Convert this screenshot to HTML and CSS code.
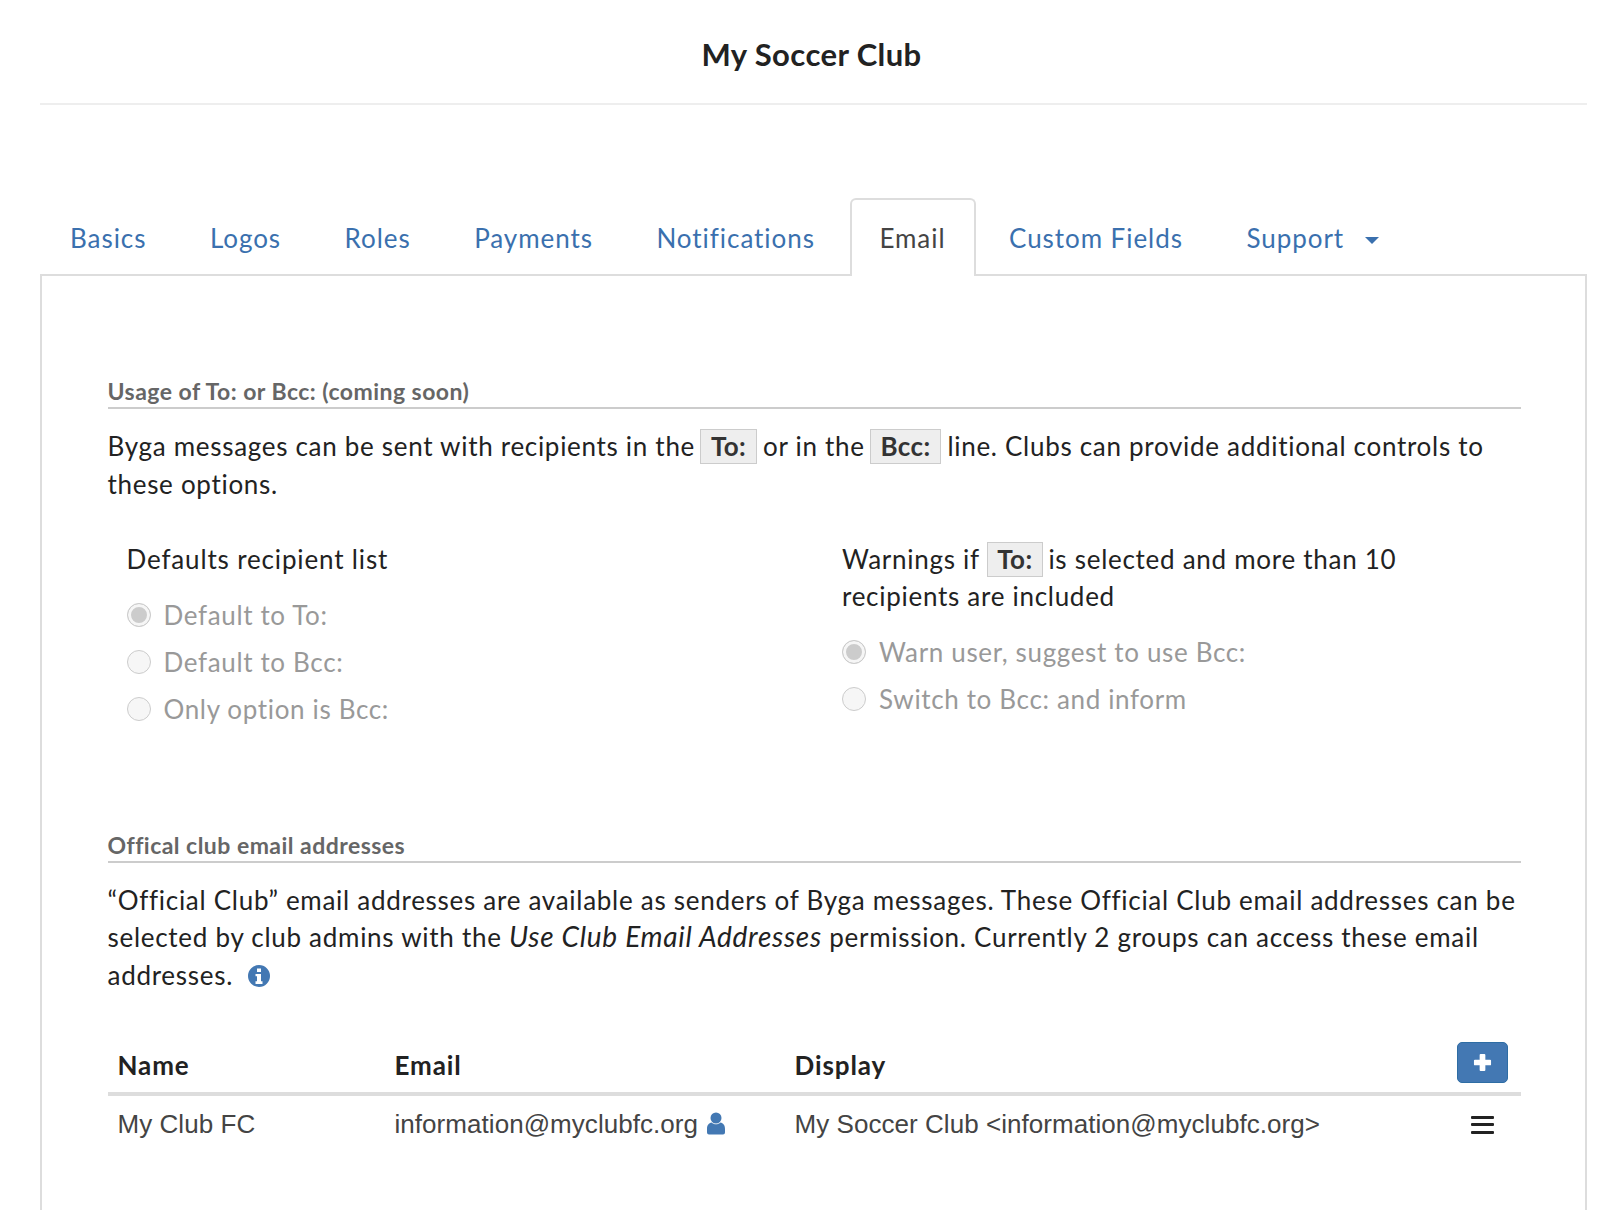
FILE: index.html
```html
<!DOCTYPE html>
<html lang="en">
<head>
<meta charset="utf-8">
<title>My Soccer Club</title>
<link rel="stylesheet" href="styles.css">
</head>
<body>
<header class="page-head"><h1 class="club-name">My Soccer Club</h1></header>
<nav class="tabs">
  <a class="tab">Basics</a>
  <a class="tab">Logos</a>
  <a class="tab">Roles</a>
  <a class="tab">Payments</a>
  <a class="tab">Notifications</a>
  <a class="tab tab-active">Email</a>
  <a class="tab">Custom Fields</a>
  <a class="tab">Support<span class="caret"></span></a>
</nav>
<main class="panel">
  <section class="usage">
    <h2 class="section-title">Usage of To: or Bcc: (coming soon)</h2>
    <p class="copy">Byga messages can be sent with recipients in the <span class="chip">To:</span> or in the <span class="chip">Bcc:</span> line. Clubs can provide additional controls to these options.</p>
    <div class="options">
      <div class="opt-col opt-left">
        <p class="opt-title">Defaults recipient list</p>
        <label class="radio"><span class="dot on"></span>Default to To:</label>
        <label class="radio"><span class="dot"></span>Default to Bcc:</label>
        <label class="radio"><span class="dot"></span>Only option is Bcc:</label>
      </div>
      <div class="opt-col opt-right">
        <p class="opt-title">Warnings if <span class="chip">To:</span> is selected and more than 10 recipients are included</p>
        <label class="radio"><span class="dot on"></span>Warn user, suggest to use Bcc:</label>
        <label class="radio"><span class="dot"></span>Switch to Bcc: and inform</label>
      </div>
    </div>
  </section>
  <section class="official">
    <h2 class="section-title">Offical club email addresses</h2>
    <p class="copy">“Official Club” email addresses are available as senders of Byga messages. These Official Club email addresses can be selected by club admins with the <em>Use Club Email Addresses</em> permission. Currently 2 groups can access these email addresses.
      <svg class="info" viewBox="0 0 24 24" aria-hidden="true"><path fill="#4378b3" fill-rule="evenodd" d="M12 1a11 11 0 1 1 0 22 11 11 0 0 1 0-22zM10 4.500v3.500h4V4.500zM8.500 10v2.300H10v5H8.500V20h7v-2.700H14V10z"/></svg></p>
    <table class="clubs">
      <thead>
        <tr><th class="c-name">Name</th><th class="c-email">Email</th><th class="c-display">Display</th><th class="c-act"><button class="add" aria-label="Add"><svg viewBox="0 0 20 20"><path fill="#fff" d="M7 2a1 1 0 0 1 1-1h4a1 1 0 0 1 1 1v5h5a1 1 0 0 1 1 1v4a1 1 0 0 1-1 1h-5v5a1 1 0 0 1-1 1H8a1 1 0 0 1-1-1v-5H2a1 1 0 0 1-1-1V8a1 1 0 0 1 1-1h5z"/></svg></button></th></tr>
      </thead>
      <tbody>
        <tr>
          <td>My Club FC</td>
          <td>information@myclubfc.org <svg class="user" viewBox="0 0 18 24" aria-hidden="true"><circle cx="9" cy="6" r="5.500" fill="#4378b3"/><path fill="#4378b3" d="M0 17c0-4 2-6 4.500-6.500 1.200 1.200 2.800 1.800 4.500 1.800s3.300-.6 4.500-1.800C16 11 18 13 18 17v3.500a2 2 0 0 1-2 2H2a2 2 0 0 1-2-2z"/></svg></td>
          <td>My Soccer Club &lt;information@myclubfc.org&gt;</td>
          <td class="c-act"><span class="menu"><i></i><i></i><i></i></span></td>
        </tr>
      </tbody>
    </table>
  </section>
</main>
</body>
</html>
```
FILE: styles.css
```css
html, body { margin: 0; height: 1210px; overflow: hidden; background: #fff; }
body { padding: 0 13px 0 40px; font-family: Lato, sans-serif; color: #222; font-size: 26px; }
.page-head { height: 103px; border-bottom: 2px solid #eee; display: flex; justify-content: center; }
.club-name { margin: 34px 0 0 -4px; font-size: 31px; line-height: 40px; font-weight: 700; letter-spacing: .4px; color: #222; }
.tabs { display: flex; margin-top: 93px; height: 76px; align-items: stretch; }
.tab { display: flex; align-items: center; padding: 2px 28px 0; margin-right: 3.500px; color: #3a70ae; letter-spacing: .95px; border: 2px solid transparent; border-bottom: 0; border-radius: 6px 6px 0 0; }
.tab-active { color: #444; background: #fff; border-color: #ddd; margin-left: 1.500px; margin-bottom: -2px; padding: 0 28px 0 27.500px; }
.caret { display: inline-block; margin-left: 21px; margin-top: 4px; border-top: 7px solid #3a70ae; border-left: 7px solid transparent; border-right: 7px solid transparent; }
.panel { border: 2px solid #ddd; border-bottom: 0; height: 936px; padding: 99px 64px 0 65.500px; box-sizing: border-box; }
.section-title { margin: 0; padding: 1px 0 1px; font-size: 23px; line-height: 30px; font-weight: 700; color: #666; border-bottom: 2px solid #ccc; letter-spacing: .47px; }
.copy { margin: 19px 0 0; line-height: 37.5px; letter-spacing: .7px; color: #222; }
.official .copy { letter-spacing: .72px; }
.copy em { font-size: 28px; line-height: 0; letter-spacing: .72px; }
.chip { display: inline-block; line-height: 33px; padding: 0 9.500px; border: 1px solid #ccc; background: #eee; font-weight: 700; margin: 0 -1px 0 -2px; color: #333; letter-spacing: .4px; }
.options { display: flex; margin-top: 19px; }
.opt-col { box-sizing: border-box; }
.opt-left { width: 734.500px; padding-left: 19px; }
.opt-right { width: 580px; }
.opt-title { margin: 19px 0 13px; line-height: 37.5px; letter-spacing: .72px; }
.opt-left .opt-title { letter-spacing: .85px; }
.opt-right .opt-title { line-height: 37px; margin-bottom: 13px; }
.opt-right .chip { margin: 0 -2px 0 0; }
.radio { display: flex; align-items: center; height: 47px; color: #999; letter-spacing: .65px; }
.dot { width: 24px; height: 24px; box-sizing: border-box; border: 1px solid #ccc; border-radius: 50%; margin-right: 13px; background: #f6f6f6; display: block; }
.dot.on { background: #ccc; box-shadow: inset 0 0 0 3px #f6f6f6; }
.official { margin-top: 96px; }
.info { width: 24px; height: 24px; vertical-align: -3px; margin-left: 7px; }
.clubs { width: 100%; margin-top: 39px; border-collapse: collapse; table-layout: fixed; }
.clubs th { text-align: left; padding: 0 10px 8px; height: 51px; box-sizing: content-box; vertical-align: bottom; font-size: 26px; line-height: 37px; font-weight: 700; color: #222; border-bottom: 4px solid #ddd; letter-spacing: .9px; }
.clubs td { padding: 10px 10px 10px; font-family: "Liberation Sans", Arial, sans-serif; font-size: 26px; line-height: 37px; color: #444; vertical-align: middle; letter-spacing: .05px; }
.c-name { width: 257px; }
.c-email { width: 380px; }
.clubs .c-act { width: 51px; padding-left: 10px; padding-right: 13px; }
.add { width: 51px; height: 41px; margin: 0 0 1px; padding: 0; display: block; border: 1px solid #2e6da4; border-radius: 5px; background: #4378b3; }
.add svg { display: block; width: 19px; height: 19px; margin: auto; }
.user { width: 20px; height: 24px; vertical-align: -3px; margin-left: 1px; }
.menu { display: block; width: 23px; margin: 0 auto; }
.menu i { display: block; height: 3px; margin: 4.500px 0; background: #222; border-radius: 1px; }
```
